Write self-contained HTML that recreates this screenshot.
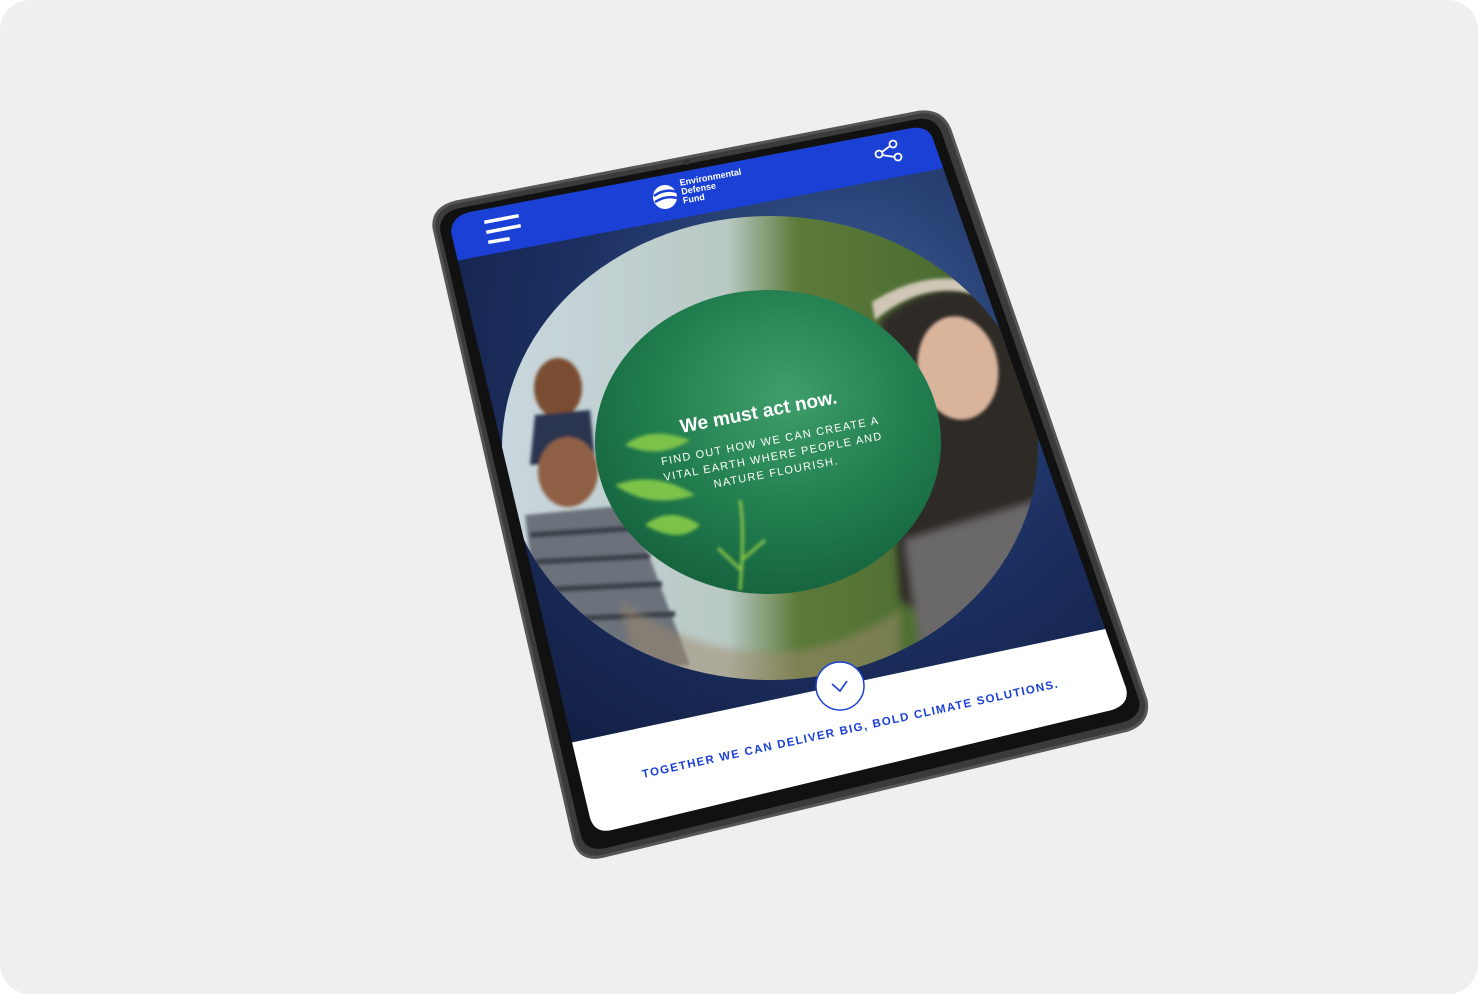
<!DOCTYPE html>
<html><head><meta charset="utf-8"><style>
html,body{margin:0;padding:0;background:#fff}
svg{display:block}
text{font-family:"Liberation Sans",sans-serif}
</style></head><body>
<svg width="1478" height="994" viewBox="0 0 1478 994" xmlns="http://www.w3.org/2000/svg">
<defs>
<clipPath id="scr"><path d="M451,232 Q452,216 470,212 L912,128 Q930,126 934,142 L1126,688 Q1130,704 1112,710 L612,830 Q595,834 590,818 Z"/></clipPath>
<clipPath id="bc"><ellipse cx="770" cy="448" rx="268" ry="232"/></clipPath>
<radialGradient id="space" cx="0.55" cy="0.3" r="0.75"><stop offset="0" stop-color="#3b5e95"/><stop offset="0.45" stop-color="#1d3062"/><stop offset="1" stop-color="#0c1634"/></radialGradient>
<linearGradient id="bigc" x1="0" y1="0" x2="1" y2="0"><stop offset="0" stop-color="#c9d7de"/><stop offset="0.42" stop-color="#b9c9c4"/><stop offset="0.55" stop-color="#5d7a3a"/><stop offset="0.8" stop-color="#4d6e32"/><stop offset="1" stop-color="#2e4a20"/></linearGradient>
<radialGradient id="inner" cx="0.55" cy="0.35" r="0.7"><stop offset="0" stop-color="#3f9e6a"/><stop offset="0.6" stop-color="#1f7a4c"/><stop offset="1" stop-color="#15603c"/></radialGradient>
<filter id="bl"><feGaussianBlur stdDeviation="4"/></filter>
<filter id="bl2"><feGaussianBlur stdDeviation="1.5"/></filter>
</defs>
<rect width="1478" height="994" rx="30" fill="#efefef"/>
<path d="M434,228 Q432,208 456,202 L920,112 Q942,110 950,130 L1146,700 Q1150,722 1128,730 L604,856 Q580,862 574,840 Z" fill="#3b3b3b" stroke="#555" stroke-width="3"/>
<path d="M440,230 Q440,212 460,208 L918,119 Q936,117 942,134 L1139,700 Q1142,716 1124,722 L606,848 Q586,852 581,836 Z" fill="#111"/>
<circle cx="687" cy="162" r="3" fill="#333"/>
<g clip-path="url(#scr)">
<rect x="400" y="100" width="800" height="800" fill="url(#space)"/>
<ellipse cx="770" cy="448" rx="268" ry="232" fill="url(#bigc)"/>
<g clip-path="url(#bc)">
<g filter="url(#bl2)">
<ellipse cx="558" cy="388" rx="24" ry="30" fill="#7a4d33"/>
<path d="M535,415 L590,410 L595,460 L530,465 Z" fill="#2b3550"/>
<ellipse cx="568" cy="472" rx="30" ry="35" fill="#8f6044"/>
<path d="M525,515 L630,505 L690,665 L545,675 Z" fill="#6c727c"/>
<path d="M530,535 L640,528 M535,562 L650,556 M540,590 L662,584 M545,620 L675,614" stroke="#3a3f48" stroke-width="6"/>
</g>
<g filter="url(#bl)">
<path d="M880,320 Q940,270 1000,300 L1050,420 L1060,560 L960,640 L900,600 Z" fill="#2f2a26"/>
<path d="M905,540 L1040,500 L1040,640 L920,650 Z" fill="#6b6867"/>
</g>
<g filter="url(#bl2)">
<ellipse cx="958" cy="368" rx="40" ry="52" fill="#d9b49b" transform="rotate(-10 958 368)"/>
<path d="M875,320 Q935,270 1000,305 L996,290 Q935,262 872,302 Z" fill="#cfc6b5"/>
</g>
<path d="M620,600 Q760,700 900,610 L900,680 L640,690 Z" fill="#a08a6e" opacity="0.5" filter="url(#bl)"/>
</g>
<ellipse cx="768" cy="442" rx="173" ry="152" fill="url(#inner)"/>
<g filter="url(#bl2)">
<path d="M615,485 Q650,510 695,495 Q655,470 615,485 Z M625,445 Q660,460 690,440 Q650,425 625,445 Z M645,525 Q680,545 700,525 Q670,505 645,525 Z" fill="#7cc24a"/>
<path d="M740,590 Q745,530 740,500 M742,560 L765,540 M741,570 L718,548" stroke="#8bc54a" stroke-width="3" fill="none"/>
</g>
<path d="M440,100 L960,100 L960,165 L450,262 Z" fill="#1a40d6"/>
<path d="M560,745 L1110,628 L1200,900 L500,950 Z" fill="#fff"/>
</g>
<g stroke="#fff" stroke-width="3.5" stroke-linecap="square">
<line x1="486" y1="222" x2="517" y2="216"/><line x1="488" y1="232" x2="519" y2="226"/><line x1="490" y1="242" x2="508" y2="239"/>
</g>
<circle cx="665" cy="197" r="12" fill="#fff"/>
<path d="M654,196 Q665,188 677,192 M655,202 Q666,195 677,198" stroke="#1a40d6" stroke-width="2.5" fill="none"/>
<g transform="rotate(-10.5 680 190)" fill="#fff" font-size="9" font-weight="bold">
<text x="681" y="186">Environmental</text><text x="681" y="195">Defense</text><text x="681" y="204">Fund</text></g>
<g stroke="#fff" stroke-width="1.8" fill="none">
<circle cx="879" cy="154" r="3.5"/><circle cx="893" cy="144" r="3.5"/><circle cx="898" cy="157" r="3.5"/>
<line x1="882" y1="152" x2="890" y2="146"/><line x1="882" y1="155" x2="895" y2="157"/></g>
<g transform="rotate(-10.8 760 420)" fill="#fff" text-anchor="middle">
<text x="760" y="418" font-size="19" font-weight="bold">We must act now.</text>
<text x="766" y="446" font-size="11" letter-spacing="1.3">FIND OUT HOW WE CAN CREATE A</text>
<text x="766" y="462" font-size="11" letter-spacing="1.3">VITAL EARTH WHERE PEOPLE AND</text>
<text x="766" y="478" font-size="11" letter-spacing="1.3">NATURE FLOURISH.</text>
</g>
<circle cx="840" cy="686" r="24" fill="#fff" stroke="#1a40d6" stroke-width="1.5"/>
<path d="M832,684 L840,691 L847,681" stroke="#1a40d6" stroke-width="1.6" fill="none"/>
<text transform="rotate(-12.3 643 778)" x="643" y="778" fill="#1a40d6" font-size="11.5" font-weight="bold" letter-spacing="1.35">TOGETHER WE CAN DELIVER BIG, BOLD CLIMATE SOLUTIONS.</text>
</svg>
</body></html>
